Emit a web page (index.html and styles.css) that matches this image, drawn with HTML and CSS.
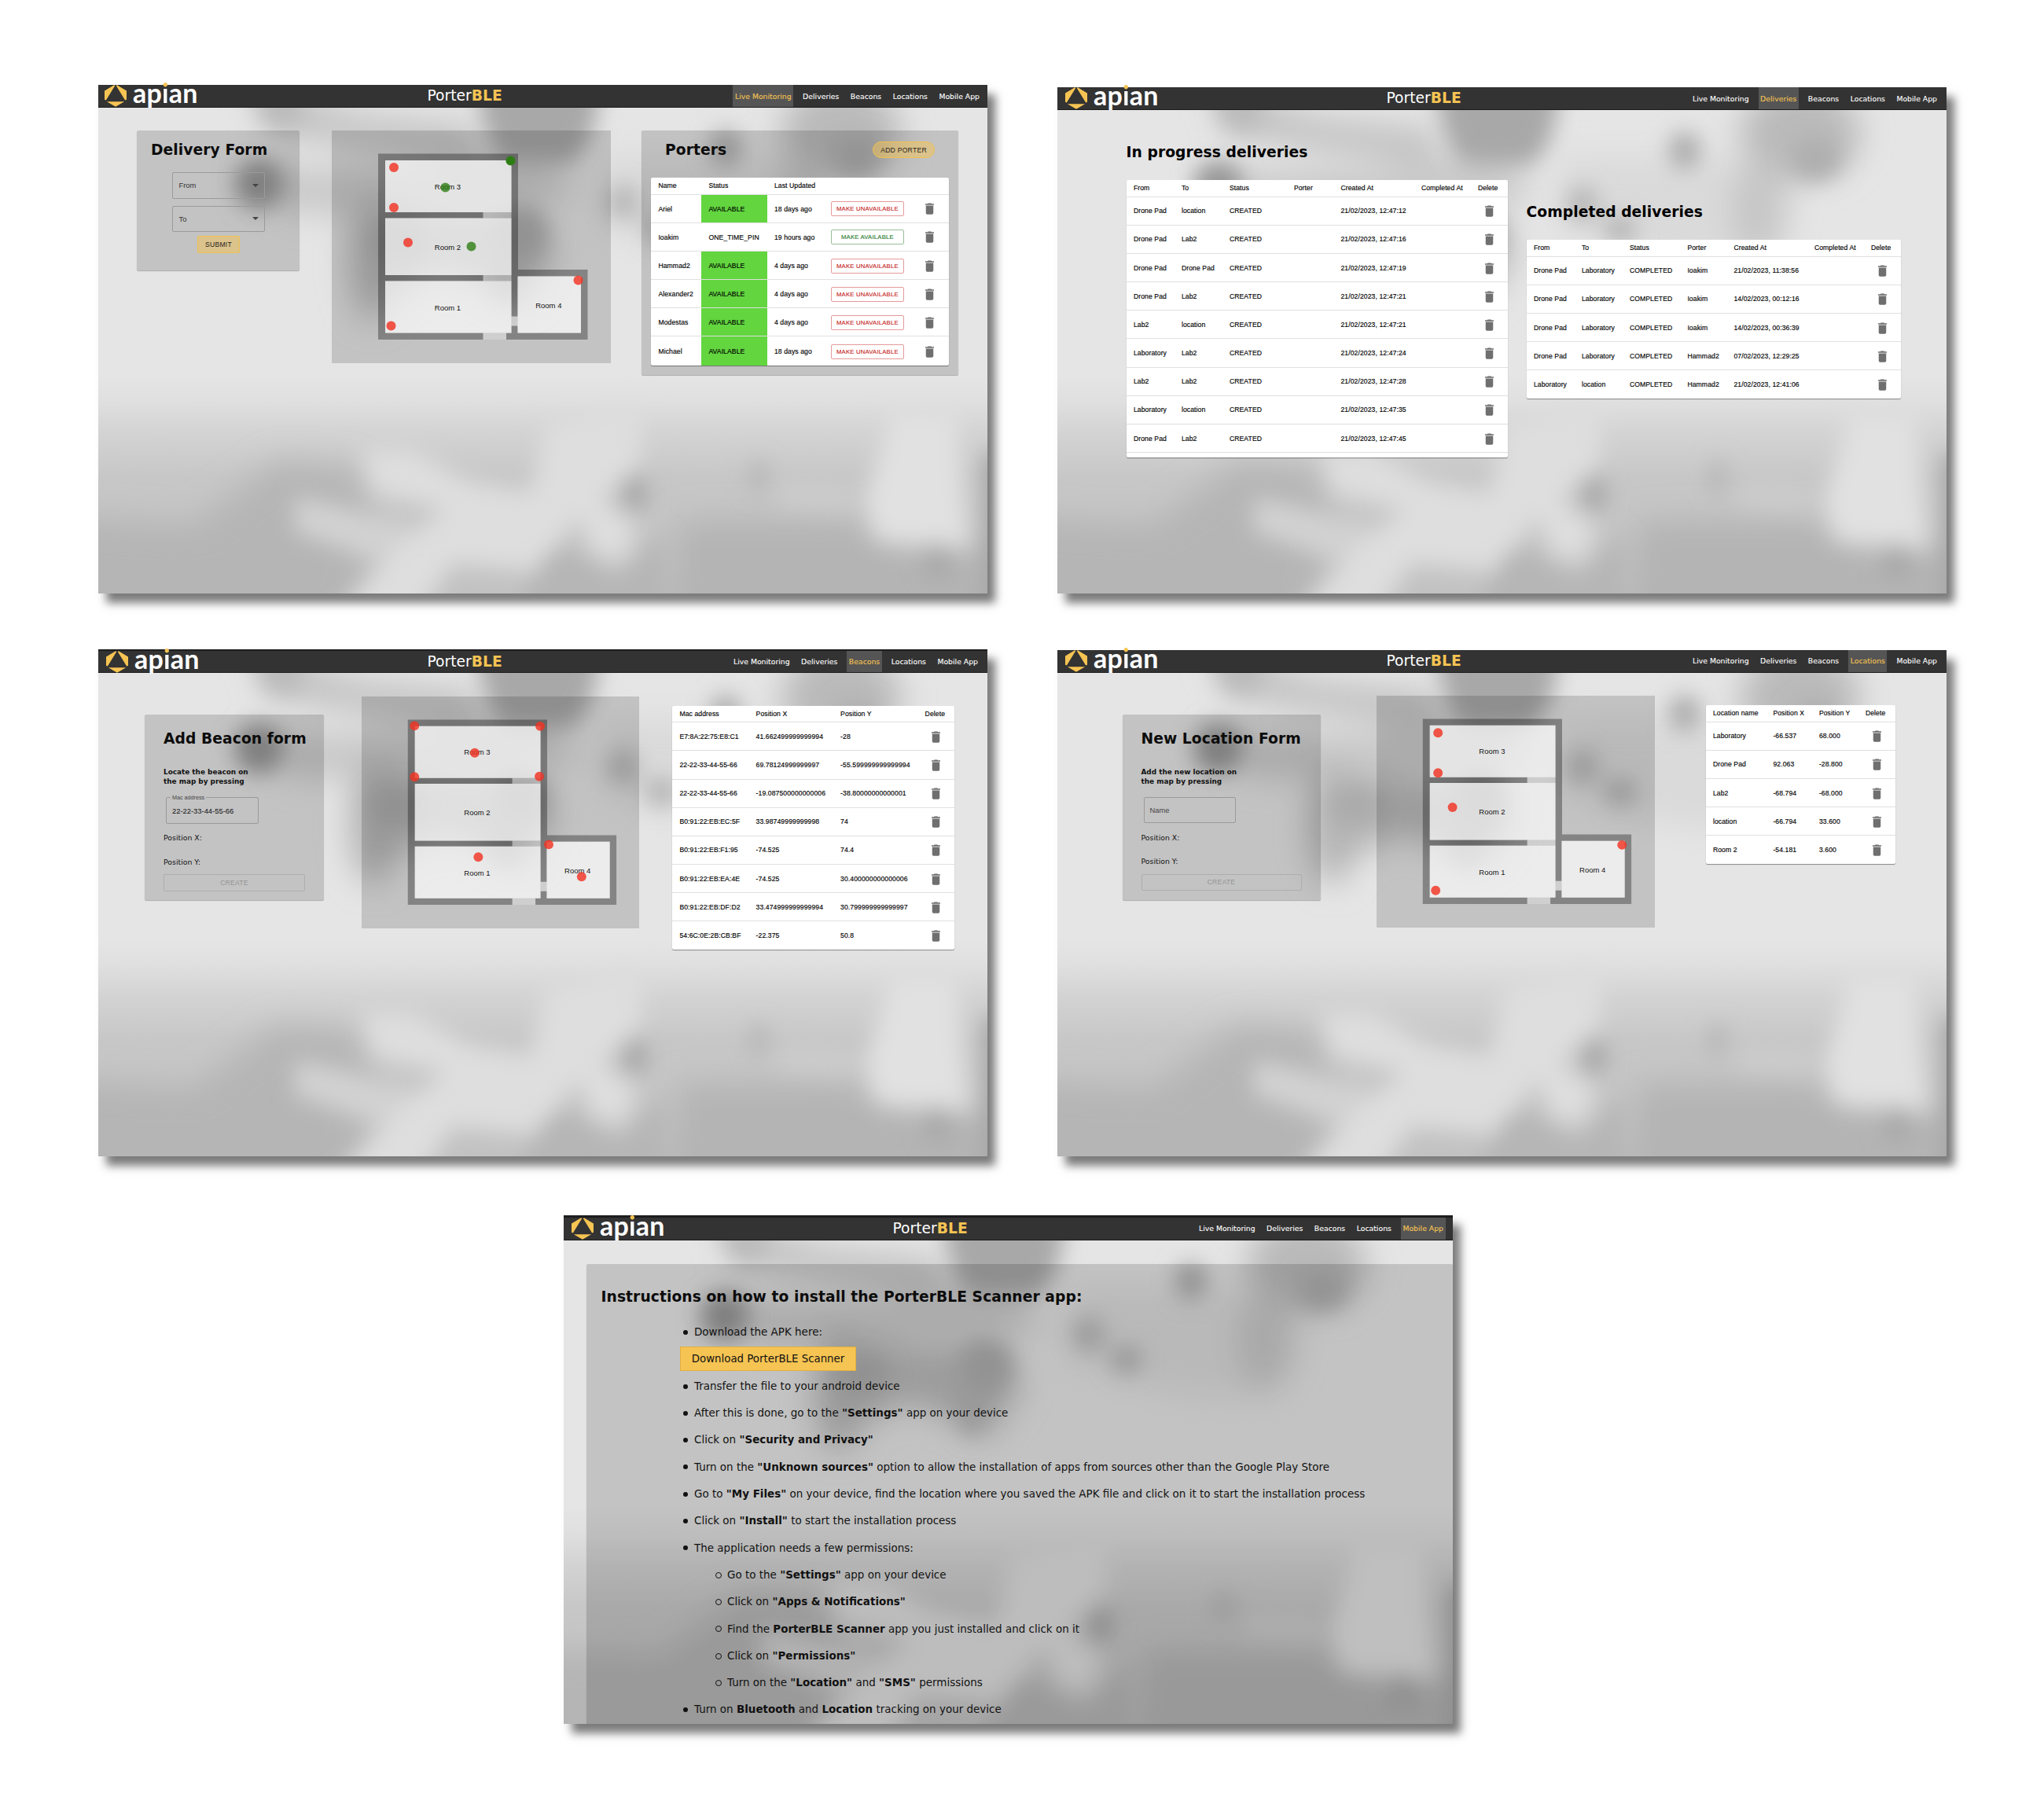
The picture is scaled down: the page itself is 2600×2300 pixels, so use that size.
FILE: index.html
```html
<!DOCTYPE html>
<html lang="en">
<head>
<meta charset="utf-8">
<title>PorterBLE</title>
<link rel="stylesheet" href="styles.css">
</head>
<body>
<svg class="defs" width="0" height="0" aria-hidden="true">
  <defs>
    <filter id="b8" x="-60%" y="-60%" width="220%" height="220%"><feGaussianBlur stdDeviation="14"/></filter>
    <filter id="b14" x="-60%" y="-60%" width="220%" height="220%"><feGaussianBlur stdDeviation="20"/></filter>
    <linearGradient id="sky" x1="0" y1="0" x2="0" y2="1">
      <stop offset="0" stop-color="#e5e5e5"/><stop offset=".55" stop-color="#e5e5e5"/>
      <stop offset=".6" stop-color="#e0e0e0"/><stop offset=".67" stop-color="#d3d3d3"/><stop offset=".76" stop-color="#c7c7c7"/><stop offset="1" stop-color="#c2c2c2"/>
    </linearGradient>
    <symbol id="photo" viewBox="0 0 1131 618" preserveAspectRatio="none">
      <rect width="1131" height="618" fill="url(#sky)"/>
      <g filter="url(#b14)">
        <path d="M190-40L330 10L480 25L480 72L330 50L220 30Z" fill="#c2c2c2"/>
        <path d="M190 80L420 75L560 50L610 110L420 135L250 135Z" fill="#c9c9c9"/>
        <path d="M370 125L440 140L560 130L580 190L540 250L440 205L370 240L330 190Z" fill="#b8b8b8"/>
        <path d="M640 60L860 60L900 200L800 200L720 180L640 150Z" fill="#dadada"/>
        <ellipse cx="350" cy="190" rx="30" ry="80" fill="#b4b4b4"/>
        <ellipse cx="945" cy="30" rx="76" ry="60" fill="#bababa"/>
        <ellipse cx="892" cy="125" rx="36" ry="66" fill="#c6c6c6"/>
        <path d="M-60 520L120 530L230 450L330 460L350 540L320 680L-60 680Z" fill="#b5b5b5"/>
        <path d="M740 525L960 525L1010 560L1160 560L1160 680L720 680Z" fill="#b4b4b4"/>
      </g>
      <g filter="url(#b8)">
        <path d="M200-20L260-20L255 24L215 24Z" fill="#bababa"/>
        <path d="M482-40L638-40Q636 56 596 72L516 70Q486 42 482-40Z" fill="#a8a8a8"/>
        <ellipse cx="205" cy="97" rx="32" ry="32" fill="#969696"/>
        <ellipse cx="380" cy="170" rx="34" ry="24" fill="#aaaaaa"/>
        <ellipse cx="537" cy="160" rx="32" ry="32" fill="#acacac"/>
        <ellipse cx="519" cy="215" rx="16" ry="35" fill="#b4b4b4"/>
        <ellipse cx="798" cy="52" rx="20" ry="24" fill="#aaaaaa"/>
        <ellipse cx="965" cy="62" rx="32" ry="26" fill="#aeaeae"/>
        <ellipse cx="668" cy="120" rx="20" ry="22" fill="#b5b5b5"/>
        <ellipse cx="716" cy="152" rx="20" ry="17" fill="#b0b0b0"/>
        <path d="M250 495L300 505L420 540L410 575L350 575L250 540Z" fill="#d2d2d2"/>
        <path d="M335 432L400 435L470 475L550 490L570 400L690 375L690 450L640 500L685 530L670 575L630 570L610 520L560 590L450 580L400 660L290 660L380 560L440 510L350 490Z" fill="#dedede"/>
        <path d="M1010 385L1090 385L1108 560L990 550L975 500Z" fill="#e1e1e1"/>
        <path d="M860 480L960 485L960 510L870 505Z" fill="#cdcdcd"/>
        <ellipse cx="682" cy="491" rx="16" ry="24" fill="#a6a6a6"/>
        <ellipse cx="840" cy="470" rx="11" ry="22" fill="#b4b4b4"/>
        <path d="M570 565L600 560L660 600L720 540L730 660L520 660Z" fill="#b6b6b6"/>
        <ellipse cx="1068" cy="577" rx="18" ry="24" fill="#a8a8a8"/>
        <rect x="1126" y="440" width="50" height="240" fill="#a6a6a6"/>
      </g>
    </symbol>
    <symbol id="hex" viewBox="0 0 30 30">
      <path d="M0 8L13 .3L14.2 1.2L2 21L0 20ZM30 8L17 .3L15.8 1.2L28 21L30 20ZM3 22.8H27L15 29.8Z"/>
    </symbol>
    <symbol id="trash" viewBox="0 0 24 24">
      <path d="M6 19c0 1.1.9 2 2 2h8c1.100 0 2-.9 2-2V7H6v12zM19 4h-3.500l-1-1h-5l-1 1H5v2h14V4z"/>
    </symbol>
    <symbol id="plan" viewBox="0 0 355 295.500">
      <path class="wall" fill-rule="evenodd" d="M59 29.500H237V177H325.500V266H222V257.500H228.500V248.500H236.500V257.500H317V185.500H236.500V236.500H228.500V38H68V104H192.500V111.500H68V184H192.500V191.500H68V257.500H192.500V266H59Z"/>
      <path class="door" d="M192.500 104h36v7.500h-36zM192.500 184h36v7.500h-36zM192.500 257.500h29.500v8.500h-29.500zM228.500 236.500h8v12h-8z"/>
      <path class="room" d="M68 38h160.500v66h-160.500zM68 111.500h160.500v72.500h-160.500zM68 191.500h160.500v66h-160.500zM236.500 185.500h80.500v72h-80.500z"/>
      <g class="label">
        <text x="147.500" y="74.500">Room 3</text><text x="147.500" y="151.500">Room 2</text>
        <text x="147.500" y="228.500">Room 1</text><text x="275.800" y="225.500">Room 4</text>
      </g>
    </symbol>
  </defs>
</svg>

<main class="board">
  <div class="pair">
    <section class="window w-live">
      <header class="bar">
        <span class="logo"><svg><use href="#hex"/></svg><span class="word">ap<i>i</i>an</span></span>
        <span class="title">Porter<b>BLE</b></span>
        <nav><a class="on">Live Monitoring</a><a>Deliveries</a><a>Beacons</a><a>Locations</a><a>Mobile App</a></nav>
      </header>
      <div class="screen">
        <svg class="photo" preserveAspectRatio="none"><use href="#photo"/></svg>
        <div class="content live">
          <form class="card delivery">
            <h1>Delivery Form</h1>
            <div class="select">From<span class="caret"></span></div>
            <div class="select">To<span class="caret"></span></div>
            <span class="btn submit">SUBMIT</span>
          </form>
          <svg class="map" viewBox="0 0 355 295.500">
            <use href="#plan"/>
            <g class="red"><circle cx="79" cy="47" r="6"/><circle cx="79" cy="98" r="6"/><circle cx="97" cy="142.500" r="6"/><circle cx="75.500" cy="248.500" r="6"/><circle cx="313.500" cy="190.500" r="6"/></g>
            <g class="green"><circle class="solid" cx="227.500" cy="38.500" r="6"/><circle cx="144.500" cy="72.500" r="6"/><circle cx="177.500" cy="147.500" r="6"/></g>
          </svg>
          <div class="card porters">
            <div class="porters-head"><h1>Porters</h1><span class="btn add">ADD PORTER</span></div>
            <div class="table t-porters">
              <div class="tr th"><span>Name</span><span>Status</span><span>Last Updated</span><span></span><span></span></div>
              <div class="tr"><span>Ariel</span><span class="ok">AVAILABLE</span><span>18 days ago</span><span><em class="un">MAKE UNAVAILABLE</em></span><svg><use href="#trash"/></svg></div>
              <div class="tr"><span>Ioakim</span><span>ONE_TIME_PIN</span><span>19 hours ago</span><span><em class="av">MAKE AVAILABLE</em></span><svg><use href="#trash"/></svg></div>
              <div class="tr"><span>Hammad2</span><span class="ok">AVAILABLE</span><span>4 days ago</span><span><em class="un">MAKE UNAVAILABLE</em></span><svg><use href="#trash"/></svg></div>
              <div class="tr"><span>Alexander2</span><span class="ok">AVAILABLE</span><span>4 days ago</span><span><em class="un">MAKE UNAVAILABLE</em></span><svg><use href="#trash"/></svg></div>
              <div class="tr"><span>Modestas</span><span class="ok">AVAILABLE</span><span>4 days ago</span><span><em class="un">MAKE UNAVAILABLE</em></span><svg><use href="#trash"/></svg></div>
              <div class="tr"><span>Michael</span><span class="ok">AVAILABLE</span><span>18 days ago</span><span><em class="un">MAKE UNAVAILABLE</em></span><svg><use href="#trash"/></svg></div>
            </div>
          </div>
        </div>
      </div>
    </section>

    <section class="window w-deliveries">
      <header class="bar">
        <span class="logo"><svg><use href="#hex"/></svg><span class="word">ap<i>i</i>an</span></span>
        <span class="title">Porter<b>BLE</b></span>
        <nav><a>Live Monitoring</a><a class="on">Deliveries</a><a>Beacons</a><a>Locations</a><a>Mobile App</a></nav>
      </header>
      <div class="screen">
        <svg class="photo" preserveAspectRatio="none"><use href="#photo"/></svg>
        <div class="content deliveries">
          <div class="progress">
            <h1>In progress deliveries</h1>
            <div class="table t-progress">
              <div class="tr th"><span>From</span><span>To</span><span>Status</span><span>Porter</span><span>Created At</span><span>Completed At</span><span>Delete</span></div>
              <div class="tr"><span>Drone Pad</span><span>location</span><span>CREATED</span><span></span><span>21/02/2023, 12:47:12</span><span></span><svg><use href="#trash"/></svg></div>
              <div class="tr"><span>Drone Pad</span><span>Lab2</span><span>CREATED</span><span></span><span>21/02/2023, 12:47:16</span><span></span><svg><use href="#trash"/></svg></div>
              <div class="tr"><span>Drone Pad</span><span>Drone Pad</span><span>CREATED</span><span></span><span>21/02/2023, 12:47:19</span><span></span><svg><use href="#trash"/></svg></div>
              <div class="tr"><span>Drone Pad</span><span>Lab2</span><span>CREATED</span><span></span><span>21/02/2023, 12:47:21</span><span></span><svg><use href="#trash"/></svg></div>
              <div class="tr"><span>Lab2</span><span>location</span><span>CREATED</span><span></span><span>21/02/2023, 12:47:21</span><span></span><svg><use href="#trash"/></svg></div>
              <div class="tr"><span>Laboratory</span><span>Lab2</span><span>CREATED</span><span></span><span>21/02/2023, 12:47:24</span><span></span><svg><use href="#trash"/></svg></div>
              <div class="tr"><span>Lab2</span><span>Lab2</span><span>CREATED</span><span></span><span>21/02/2023, 12:47:28</span><span></span><svg><use href="#trash"/></svg></div>
              <div class="tr"><span>Laboratory</span><span>location</span><span>CREATED</span><span></span><span>21/02/2023, 12:47:35</span><span></span><svg><use href="#trash"/></svg></div>
              <div class="tr"><span>Drone Pad</span><span>Lab2</span><span>CREATED</span><span></span><span>21/02/2023, 12:47:45</span><span></span><svg><use href="#trash"/></svg></div>
              <div class="rest"></div>
            </div>
          </div>
          <div class="completed">
            <h1>Completed deliveries</h1>
            <div class="table t-completed">
              <div class="tr th"><span>From</span><span>To</span><span>Status</span><span>Porter</span><span>Created At</span><span>Completed At</span><span>Delete</span></div>
              <div class="tr"><span>Drone Pad</span><span>Laboratory</span><span>COMPLETED</span><span>Ioakim</span><span>21/02/2023, 11:38:56</span><span></span><svg><use href="#trash"/></svg></div>
              <div class="tr"><span>Drone Pad</span><span>Laboratory</span><span>COMPLETED</span><span>Ioakim</span><span>14/02/2023, 00:12:16</span><span></span><svg><use href="#trash"/></svg></div>
              <div class="tr"><span>Drone Pad</span><span>Laboratory</span><span>COMPLETED</span><span>Ioakim</span><span>14/02/2023, 00:36:39</span><span></span><svg><use href="#trash"/></svg></div>
              <div class="tr"><span>Drone Pad</span><span>Laboratory</span><span>COMPLETED</span><span>Hammad2</span><span>07/02/2023, 12:29:25</span><span></span><svg><use href="#trash"/></svg></div>
              <div class="tr"><span>Laboratory</span><span>location</span><span>COMPLETED</span><span>Hammad2</span><span>21/02/2023, 12:41:06</span><span></span><svg><use href="#trash"/></svg></div>
            </div>
          </div>
        </div>
      </div>
    </section>
  </div>

  <div class="pair second">
    <section class="window w-beacons">
      <header class="bar">
        <span class="logo"><svg><use href="#hex"/></svg><span class="word">ap<i>i</i>an</span></span>
        <span class="title">Porter<b>BLE</b></span>
        <nav><a>Live Monitoring</a><a>Deliveries</a><a class="on">Beacons</a><a>Locations</a><a>Mobile App</a></nav>
      </header>
      <div class="screen">
        <svg class="photo" preserveAspectRatio="none"><use href="#photo"/></svg>
        <div class="content beacons">
          <form class="card place">
            <h1>Add Beacon form</h1>
            <p class="hint">Locate the beacon on<br>the map by pressing</p>
            <fieldset class="field"><legend>Mac address</legend>22-22-33-44-55-66</fieldset>
            <p class="pos">Position X:</p>
            <p class="pos">Position Y:</p>
            <span class="create">CREATE</span>
          </form>
          <svg class="map" viewBox="0 0 355 295.500" preserveAspectRatio="none">
            <use href="#plan"/>
            <g class="red"><circle cx="67.500" cy="37.500" r="6"/><circle cx="228" cy="38" r="6"/><circle cx="144.500" cy="72" r="6"/><circle cx="67.500" cy="102.500" r="6"/><circle cx="227" cy="102" r="6"/><circle cx="149" cy="205" r="6"/><circle cx="239" cy="189" r="6"/><circle cx="281" cy="230" r="6"/></g>
          </svg>
          <div class="table t-beacons">
            <div class="tr th"><span>Mac address</span><span>Position X</span><span>Position Y</span><span>Delete</span></div>
            <div class="tr"><span>E7:8A:22:75:E8:C1</span><span>41.662499999999994</span><span>-28</span><svg><use href="#trash"/></svg></div>
            <div class="tr"><span>22-22-33-44-55-66</span><span>69.78124999999997</span><span>-55.599999999999994</span><svg><use href="#trash"/></svg></div>
            <div class="tr"><span>22-22-33-44-55-66</span><span>-19.087500000000006</span><span>-38.80000000000001</span><svg><use href="#trash"/></svg></div>
            <div class="tr"><span>B0:91:22:EB:EC:5F</span><span>33.98749999999998</span><span>74</span><svg><use href="#trash"/></svg></div>
            <div class="tr"><span>B0:91:22:EB:F1:95</span><span>-74.525</span><span>74.4</span><svg><use href="#trash"/></svg></div>
            <div class="tr"><span>B0:91:22:EB:EA:4E</span><span>-74.525</span><span>30.400000000000006</span><svg><use href="#trash"/></svg></div>
            <div class="tr"><span>B0:91:22:EB:DF:D2</span><span>33.474999999999994</span><span>30.799999999999997</span><svg><use href="#trash"/></svg></div>
            <div class="tr"><span>54:6C:0E:2B:CB:BF</span><span>-22.375</span><span>50.8</span><svg><use href="#trash"/></svg></div>
          </div>
        </div>
      </div>
    </section>

    <section class="window w-locations">
      <header class="bar">
        <span class="logo"><svg><use href="#hex"/></svg><span class="word">ap<i>i</i>an</span></span>
        <span class="title">Porter<b>BLE</b></span>
        <nav><a>Live Monitoring</a><a>Deliveries</a><a>Beacons</a><a class="on">Locations</a><a>Mobile App</a></nav>
      </header>
      <div class="screen">
        <svg class="photo" preserveAspectRatio="none"><use href="#photo"/></svg>
        <div class="content locations">
          <form class="card place">
            <h1>New Location Form</h1>
            <p class="hint">Add the new location on<br>the map by pressing</p>
            <div class="field empty">Name</div>
            <p class="pos">Position X:</p>
            <p class="pos">Position Y:</p>
            <span class="create">CREATE</span>
          </form>
          <svg class="map" viewBox="0 0 355 295.500" preserveAspectRatio="none">
            <use href="#plan"/>
            <g class="red"><circle cx="78.500" cy="47.500" r="6"/><circle cx="78.500" cy="98.500" r="6"/><circle cx="97" cy="142.500" r="6"/><circle cx="75.500" cy="248.500" r="6"/><circle cx="313.500" cy="190.500" r="6"/></g>
          </svg>
          <div class="table t-locations">
            <div class="tr th"><span>Location name</span><span>Position X</span><span>Position Y</span><span>Delete</span></div>
            <div class="tr"><span>Laboratory</span><span>-66.537</span><span>68.000</span><svg><use href="#trash"/></svg></div>
            <div class="tr"><span>Drone Pad</span><span>92.063</span><span>-28.800</span><svg><use href="#trash"/></svg></div>
            <div class="tr"><span>Lab2</span><span>-68.794</span><span>-68.000</span><svg><use href="#trash"/></svg></div>
            <div class="tr"><span>location</span><span>-66.794</span><span>33.600</span><svg><use href="#trash"/></svg></div>
            <div class="tr"><span>Room 2</span><span>-54.181</span><span>3.600</span><svg><use href="#trash"/></svg></div>
          </div>
        </div>
      </div>
    </section>
  </div>

  <section class="window w-app">
    <header class="bar">
      <span class="logo"><svg><use href="#hex"/></svg><span class="word">ap<i>i</i>an</span></span>
      <span class="title">Porter<b>BLE</b></span>
      <nav><a>Live Monitoring</a><a>Deliveries</a><a>Beacons</a><a>Locations</a><a class="on">Mobile App</a></nav>
    </header>
    <div class="screen">
      <svg class="photo" preserveAspectRatio="none"><use href="#photo"/></svg>
      <div class="content app">
        <article class="card guide">
          <h1>Instructions on how to install the PorterBLE Scanner app:</h1>
          <ul>
            <li>Download the APK here:</li>
            <li class="dl"><span>Download PorterBLE Scanner</span></li>
            <li>Transfer the file to your android device</li>
            <li>After this is done, go to the <b>"Settings"</b> app on your device</li>
            <li>Click on <b>"Security and Privacy"</b></li>
            <li>Turn on the <b>"Unknown sources"</b> option to allow the installation of apps from sources other than the Google Play Store</li>
            <li>Go to <b>"My Files"</b> on your device, find the location where you saved the APK file and click on it to start the installation process</li>
            <li>Click on <b>"Install"</b> to start the installation process</li>
            <li>The application needs a few permissions:</li>
            <li class="sub">Go to the <b>"Settings"</b> app on your device</li>
            <li class="sub">Click on <b>"Apps &amp; Notifications"</b></li>
            <li class="sub">Find the <b>PorterBLE Scanner</b> app you just installed and click on it</li>
            <li class="sub">Click on <b>"Permissions"</b></li>
            <li class="sub">Turn on the <b>"Location"</b> and <b>"SMS"</b> permissions</li>
            <li>Turn on <b>Bluetooth</b> and <b>Location</b> tracking on your device</li>
          </ul>
        </article>
      </div>
    </div>
  </section>
</main>
</body>
</html>
```
FILE: styles.css
```css
* { box-sizing: border-box; }
body { margin: 0; background: #fff; color: #111; font-family: "Liberation Sans", Arial, sans-serif; }
.defs { display: block; height: 0; }
h1, p, ul { margin: 0; padding: 0; }

.board { width: 2600px; height: 2300px; padding: 108px 124px 0 125px; overflow: hidden; }
.pair { display: flex; justify-content: space-between; align-items: flex-start; height: 718px; }
.pair.second { height: 720px; }

.window { width: 1131px; display: flex; flex-direction: column; box-shadow: 10px 12px 11px rgba(0, 0, 0, .52); }
.w-live { height: 647px; }
.w-deliveries { height: 644px; margin-top: 3px; }
.w-beacons { height: 645px; }
.w-locations { height: 644px; margin-top: 1px; }
.w-app { height: 647px; margin-left: 592px; }

/* Top bar */
.bar { height: 29px; flex: none; display: flex; background: #333; border-bottom: 1px solid #1c1c1c; padding-right: 9.5px; font-family: "DejaVu Sans", Verdana, sans-serif; color: #fff; white-space: nowrap; position: relative; z-index: 1; }
.w-beacons .bar { height: 30px; border-top: 2px solid #1d1d1f; }
.w-app .bar { height: 32px; border-top: 3px solid #1d1d1f; }
.w-live .bar { padding-right: 7.5px; }
.logo { width: 418.500px; display: flex; padding-left: 9px; }
.w-live .logo { padding-left: 7px; }
.logo svg { width: 30px; height: 28px; fill: #f6c453; flex: none; }
.word { margin-left: 7px; font: 700 34px/20px Lato, sans-serif; height: 20px; letter-spacing: .2px; }
.word i { font-style: normal; color: transparent; background: linear-gradient(#f6c453 0 15px, #fff 15px); background-clip: text; -webkit-background-clip: text; }
.title { font-size: 18.700px; line-height: 28px; width: 200px; }
.title b { color: #f6c453; font-size: 18.700px; }
nav { margin-left: auto; display: flex; gap: 9.500px; }
nav a { padding: 0 2.500px; font-size: 9.300px; line-height: 28px; -webkit-text-stroke: .1px; }
.w-live nav a, .w-deliveries nav a { line-height: 29px; height: 28px; }
nav a.on { background: #555; color: #f6c453; }

/* Backdrop and content share one grid cell */
.screen { flex: 1; min-height: 0; display: grid; overflow: hidden; }
.screen > * { grid-area: 1 / 1; min-width: 0; min-height: 0; }
.photo { width: 100%; height: 100%; display: block; }
.content { position: relative; display: flex; align-items: flex-start; }

.card { background: rgba(0, 0, 0, .15); border-radius: 2px; box-shadow: 0 1px 1px rgba(0, 0, 0, .25); }
h1 { font: 700 18.700px/24px "DejaVu Sans", Verdana, sans-serif; letter-spacing: .07px; color: #0c0c0c; white-space: nowrap; }

/* Live monitoring */
.live { padding: 29px 0 0 49px; }
.delivery { width: 207px; height: 178px; padding: 13px 18px; display: flex; flex-direction: column; }
.select { width: 118px; height: 33.500px; margin: 16px 0 0 27px; padding: 0 7.500px; display: flex; align-items: center; justify-content: space-between; border: 1px solid #9a9a9a; border-radius: 2px; font-size: 9.400px; color: #333; }
.select + .select { margin-top: 9px; }
.caret { border: 4px solid transparent; border-top-color: #444; border-bottom: 0; }
.btn { display: flex; align-items: center; justify-content: center; font-size: 8.600px; letter-spacing: .25px; border: 1px solid #f0c14f; background: rgba(246, 196, 83, .5); color: #222; border-radius: 2px; }
.submit { width: 54px; height: 22px; margin: 5px 0 0 59px; }
.add { width: 79px; height: 21px; border-radius: 11px; }
.map { flex: none; width: 355px; height: 295.500px; background: rgba(0, 0, 0, .15); }
.live .map { margin: 0 39.500px 0 40.500px; }
.wall { fill: rgba(0, 0, 0, .32); }
.door { fill: rgba(255, 255, 255, .2); }
.room { fill: rgba(255, 255, 255, .68); }
.label { font: 9.500px "Liberation Sans", Arial, sans-serif; text-anchor: middle; fill: #111; }
.red { fill: #f03323; fill-opacity: .82; }
.green { fill: #2d7d13; fill-opacity: .8; }
.green .solid { fill-opacity: 1; }
.porters { width: 402.500px; height: 311px; padding: 0 11.500px 0 12px; }
.porters-head { height: 60px; display: flex; justify-content: space-between; padding: 13px 18px 0 18px; }
.porters-head .add { margin-top: 1px; }

/* Tables */
.table { background: #fff; border-radius: 2px; box-shadow: 0 1px 1px rgba(0, 0, 0, .4); font-size: 8.650px; letter-spacing: .01em; overflow: hidden; white-space: nowrap; flex: none; color: #000; -webkit-text-stroke: .15px; }
.tr { display: grid; height: 36.170px; border-bottom: 1px solid #e0e0e0; }
.tr:last-child { border-bottom: 0; }
.tr.th { height: 21.700px; }
.tr > span { padding-left: 9.400px; display: flex; align-items: center; }
.tr svg { width: 19px; height: 19px; fill: #6f6f6f; place-self: center; margin-top: 1px; }
.ok { background: #62d53f; }
.tr em { font-style: normal; width: 93px; height: 19px; border: 1px solid; border-radius: 2px; display: flex; align-items: center; justify-content: center; font-size: 7.700px; letter-spacing: .22px; }
.un { color: #c62828; border-color: #e59a9a !important; }
.av { color: #2e7d32; border-color: #97be99 !important; }
.t-porters .tr { grid-template-columns: 64px 83.500px 72px 110px 49.500px; }
.t-porters .tr:not(.th) > span { padding-top: 1px; }
.t-progress .tr { grid-template-columns: 61px 61px 82px 59.500px 102.500px 72px 47.500px; }
.t-completed .tr { grid-template-columns: 61px 61px 73.500px 59px 102.500px 72px 47.500px; }
.t-beacons .tr { grid-template-columns: 97.200px 107.500px 107.500px 47.300px; }
.t-locations .tr { grid-template-columns: 76.500px 58.500px 59px 47.500px; }
.rest { height: 6px; }

/* Deliveries */
.deliveries { padding-left: 87.500px; }
.progress { width: 485.500px; padding-top: 42px; }
.completed { width: 476.500px; margin-left: 23.500px; padding-top: 118px; }
.deliveries h1 { height: 47px; color: #000; }

/* Beacons and locations */
.place { height: 236px; padding: 19px 24px 0; display: flex; flex-direction: column; }
.beacons { padding: 30px 0 0 59px; }
.beacons .place { width: 228px; margin-top: 23px; }
.beacons .map { width: 353.500px; height: 294.500px; margin: 0 42px 0 47.500px; }
.beacons .table { margin-top: 11.500px; }
.locations { padding: 29px 0 0 83px; }
.locations .place { width: 251.500px; margin-top: 23.500px; padding-left: 23.500px; }
.locations .map { width: 353.500px; height: 294.500px; margin: 0 65px 0 71.500px; }
.locations .table { margin-top: 12px; }
.hint { margin-top: 24px; font: 700 8.900px/12px "DejaVu Sans", Verdana, sans-serif; white-space: nowrap; }
.field { width: 117.500px; height: 33px; margin: 14.500px 0 0 3px; padding: 0 7px; border: 1px solid #9a9a9a; border-radius: 2px; font-size: 9.400px; line-height: 32px; flex: none; }
fieldset.field { height: 37px; margin-top: 10.500px; padding: 0 7px; line-height: 25px; }
.field legend { padding: 0 2px; margin-left: -2px; font-size: 7.200px; line-height: 8px; color: #444; }
.field.empty { color: #444; }
.pos { font: 9.350px/12px "DejaVu Sans", Verdana, sans-serif; margin-top: 12.500px; }
.pos + .pos { margin-top: 18.500px; }
.create { height: 21.500px; margin-top: 9.500px; border: 1px solid #aeaeae; border-radius: 2px; color: #949494; font-size: 8.600px; letter-spacing: .25px; display: flex; align-items: center; justify-content: center; flex: none; }

/* Install guide */
.app { padding: 30px 0 0 29px; }
.guide { width: 1102px; height: 585px; padding: 30px 0 0 18.500px; border-radius: 2px 2px 0 0; }
.guide ul { list-style: none; padding: 15.300px 0 0 100.500px; font: 13.480px/34.300px "DejaVu Sans", Verdana, sans-serif; }
.guide li { height: 34.300px; display: flex; align-items: center; white-space: pre; }
.guide li::before { content: ""; width: 6px; height: 6px; margin: 1px 8.500px 0 3.500px; border-radius: 50%; background: #111; flex: none; }
.guide li.sub { padding-left: 41px; }
.guide li.sub::before { background: none; border: 1px solid #111; margin-right: 7.500px; }
.guide li.dl::before { display: none; }
.dl span { width: 224px; height: 30.500px; line-height: 29px; font-size: 13.350px; text-align: center; background: #f6c453; border: 1px solid #e2b03f; }
```
